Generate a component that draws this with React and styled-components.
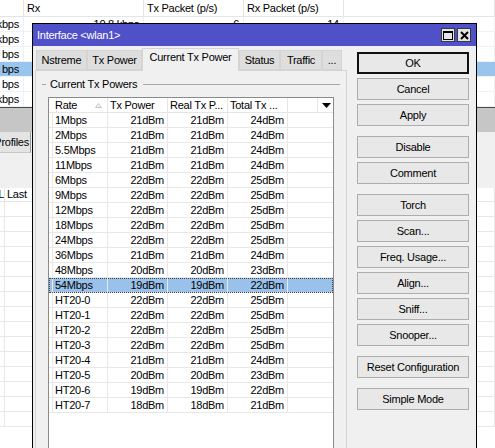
import React from 'react';
import styled, { createGlobalStyle } from 'styled-components';

const GlobalStyle = createGlobalStyle`
  html, body {
    margin: 0;
    padding: 0;
  }
  body {
    font-family: "Liberation Sans", Arial, sans-serif;
    font-size: 11px;
    letter-spacing: -0.25px;
    color: #000;
    background: #fff;
    overflow: hidden;
  }
`;

const Screen = styled.div`
  position: relative;
  width: 495px;
  height: 448px;
  overflow: hidden;
  background: #fff;
`;

// ---- background window (the interface list behind the dialog) ----

const bgCols = '24px 120px 100px 100px 1fr';

const BgHeadRow = styled.div`
  display: grid;
  grid-template-columns: ${bgCols};
  height: 17px;
  box-sizing: border-box;
  border-bottom: 1px solid #e5e5e5;
`;

const BgHeadCell = styled.div`
  border-right: 1px solid #e5e5e5;
  padding-left: 3px;
  line-height: 16px;
  white-space: nowrap;
  overflow: hidden;
`;

const BgRow = styled.div`
  display: grid;
  grid-template-columns: ${bgCols};
  height: 15px;
  box-sizing: border-box;
  border-bottom: 1px solid #f0f0f0;
  background: ${(p) => (p.$selected ? '#99c4ec' : '#fff')};
`;

const BgCell = styled.div`
  display: flex;
  justify-content: flex-end;
  padding-right: 4px;
  line-height: 14px;
  white-space: nowrap;
  overflow: hidden;
  border-right: 1px solid ${(p) => (p.$selected ? 'transparent' : '#f0f0f0')};
`;

const GrayBar = styled.div`
  height: 25px;
  box-sizing: border-box;
  border-top: 1px solid #4a4a4a;
  background: #c6c6c6;
`;

const SubTabStrip = styled.div`
  display: flex;
  height: 21px;
  background: #f0f0f0;
`;

const SubTab = styled.div`
  width: 31px;
  box-sizing: border-box;
  display: flex;
  justify-content: flex-end;
  background: #e4e4e4;
  border-right: 1px solid #9a9a9a;
  border-bottom: 1px solid #c8c8c8;
  line-height: 20px;
  white-space: nowrap;
  overflow: hidden;
  padding-right: 1px;
`;

const FilterArea = styled.div`
  height: 35px;
  background: #f0f0f0;
`;

const SubHead = styled.div`
  display: grid;
  grid-template-columns: 5px 1fr;
  height: 14px;
  box-sizing: border-box;
  border-bottom: 1px solid #e5e5e5;
  background: #fff;
`;

const SubHeadCell = styled.div`
  display: flex;
  justify-content: ${(p) => (p.$end ? 'flex-end' : 'flex-start')};
  border-right: 1px solid #e5e5e5;
  padding-left: 2px;
  line-height: 13px;
  white-space: nowrap;
  overflow: hidden;
`;

const SubRow = styled.div`
  display: grid;
  grid-template-columns: 5px 1fr;
  height: 15px;
  box-sizing: border-box;
  border-bottom: 1px solid #e8e8e8;
`;

const SubCell = styled.div`
  border-right: 1px solid #e8e8e8;
`;

// ---- dialog ----

const Dialog = styled.div`
  position: absolute;
  left: 32px;
  top: 23px;
  width: 445px;
  height: 440px;
  box-sizing: border-box;
  border: 1px solid #000;
  background: #f0f0f0;
  display: flex;
  flex-direction: column;
`;

const TitleBar = styled.div`
  height: 22px;
  flex: none;
  background: #5050c8;
  color: #fff;
  display: flex;
  align-items: center;
  padding: 0 5px 0 4px;
  font-size: 11px;
`;

const TitleText = styled.div`
  flex: 1;
  white-space: nowrap;
`;

const TitleButtons = styled.div`
  display: flex;
  gap: 2px;
`;

const TitleButton = styled.div`
  width: 14px;
  height: 14px;
  box-sizing: border-box;
  border: 1px solid #3a3a3a;
  background: #e4e4e4;
  display: flex;
  align-items: center;
  justify-content: center;
`;

const Body = styled.div`
  flex: 1;
  display: flex;
  gap: 10px;
  padding: 2px 7px 0 2px;
  min-height: 0;
`;

const LeftColumn = styled.div`
  width: 312px;
  display: flex;
  flex-direction: column;
`;

const TabRow = styled.div`
  display: flex;
  align-items: flex-end;
  height: 22px;
  padding-left: 1px;
  position: relative;
  z-index: 1;
`;

const Tab = styled.div`
  width: ${(p) => p.$w}px;
  box-sizing: border-box;
  height: ${(p) => (p.$active ? 23 : 20)}px;
  margin-bottom: ${(p) => (p.$active ? -1 : 0)}px;
  border: 1px solid #d4d4d4;
  border-bottom: ${(p) => (p.$active ? 'none' : '1px solid #d4d4d4')};
  background: ${(p) => (p.$active ? '#f0f0f0' : '#dedede')};
  text-align: center;
  line-height: ${(p) => (p.$active ? 17 : 19)}px;
  white-space: nowrap;
  overflow: hidden;
`;

const Panel = styled.div`
  flex: 1;
  border: 1px solid #d4d4d4;
  background: #f0f0f0;
  padding: 0 12px 0 12px;
`;

const GroupHeader = styled.div`
  display: flex;
  align-items: center;
  height: 14px;
  margin: 6px -6px 0 -6px;
  gap: 4px;
`;

const GroupLine = styled.div`
  width: ${(p) => (p.$w ? `${p.$w}px` : 'auto')};
  flex: ${(p) => (p.$w ? 'none' : 1)};
  margin-left: ${(p) => (p.$w ? 0 : 2)}px;
  border-top: 1px solid #a8a8a8;
`;

const GroupLabel = styled.span`
  white-space: nowrap;
`;

const Table = styled.div`
  margin-top: 6px;
  width: 286px;
  height: 400px;
  box-sizing: border-box;
  border: 1px solid #8a8a8a;
  background: #fff;
`;

const tableCols = '4px 55px 60px 60px 60px 30px 1fr';

const HeadRow = styled.div`
  display: grid;
  grid-template-columns: ${tableCols};
  height: 15px;
  box-sizing: border-box;
  border-bottom: 1px solid #e5e5e5;
`;

const HeadCell = styled.div`
  box-sizing: border-box;
  border-right: ${(p) => (p.$last ? 'none' : '1px solid #e5e5e5')};
  padding-left: 2px;
  line-height: 14px;
  white-space: nowrap;
  overflow: hidden;
  display: flex;
  align-items: center;
  justify-content: ${(p) => (p.$center ? 'center' : 'space-between')};
  padding-right: ${(p) => (p.$center ? 0 : 5)}px;
`;

const Row = styled.div`
  display: grid;
  grid-template-columns: ${tableCols};
  height: 15px;
  box-sizing: border-box;
  border-bottom: 1px solid #e8e8e8;
  background: ${(p) => (p.$selected ? '#99c1e9' : '#fff')};
  outline: ${(p) => (p.$selected ? '1px dotted #444' : 'none')};
  outline-offset: -1px;
`;

const Cell = styled.div`
  box-sizing: border-box;
  border-right: ${(p) => (p.$noLine ? 'none' : '1px solid #e8e8e8')};
  text-align: ${(p) => (p.$right ? 'right' : 'left')};
  padding: ${(p) => (p.$right ? '0 3px 0 0' : '0 0 0 2px')};
  line-height: 14px;
  white-space: nowrap;
  overflow: hidden;
`;

const ButtonColumn = styled.div`
  width: 112px;
  margin-top: 4px;
  display: flex;
  flex-direction: column;
  gap: 10px;
`;

const ButtonGroup = styled.div`
  display: flex;
  flex-direction: column;
  gap: 4px;
`;

const Button = styled.div`
  height: 22px;
  box-sizing: border-box;
  border: ${(p) => (p.$default ? '2px solid #111' : '1px solid #adadad')};
  background: #e8e8e8;
  display: flex;
  align-items: center;
  justify-content: center;
  white-space: nowrap;
`;

// only the parts of the list that peek out around the dialog carry text
const bgRows = [
  ['7.5 kbps', '10.8 kbps', '6', '14'],
  ['23.1 kbps', '', '', ''],
  ['0 bps', '', '', ''],
  ['0 bps', '', '', ''],
  ['0 bps', '', '', ''],
  ['1.2 kbps', '', '', ''],
];

const powers = [
  ['1Mbps', 21, 21, 24],
  ['2Mbps', 21, 21, 24],
  ['5.5Mbps', 21, 21, 24],
  ['11Mbps', 21, 21, 24],
  ['6Mbps', 22, 22, 25],
  ['9Mbps', 22, 22, 25],
  ['12Mbps', 22, 22, 25],
  ['18Mbps', 22, 22, 25],
  ['24Mbps', 22, 22, 25],
  ['36Mbps', 21, 21, 24],
  ['48Mbps', 20, 20, 23],
  ['54Mbps', 19, 19, 22],
  ['HT20-0', 22, 22, 25],
  ['HT20-1', 22, 22, 25],
  ['HT20-2', 22, 22, 25],
  ['HT20-3', 22, 22, 25],
  ['HT20-4', 21, 21, 24],
  ['HT20-5', 20, 20, 23],
  ['HT20-6', 19, 19, 22],
  ['HT20-7', 18, 18, 21],
];

const tabs = [
  ['Nstreme', 51],
  ['Tx Power', 55],
  ['Current Tx Power', 97],
  ['Status', 41],
  ['Traffic', 42],
  ['...', 20],
];

const buttonGroups = [
  ['OK', 'Cancel', 'Apply'],
  ['Disable', 'Comment'],
  ['Torch', 'Scan...', 'Freq. Usage...', 'Align...', 'Sniff...', 'Snooper...'],
  ['Reset Configuration'],
  ['Simple Mode'],
];

const MaxIcon = () => (
  <svg width="10" height="9" viewBox="0 0 10 9">
    <rect x="0.5" y="0.5" width="9" height="8" fill="none" stroke="#000" />
    <line x1="0" y1="1.5" x2="10" y2="1.5" stroke="#000" />
  </svg>
);

const CloseIcon = () => (
  <svg width="9" height="9" viewBox="0 0 9 9">
    <path d="M1 1 L8 8 M8 1 L1 8" stroke="#000" strokeWidth="2" />
  </svg>
);

const SortUp = () => (
  <svg width="7" height="5" viewBox="0 0 7 5">
    <path d="M0.5 4.5 L3.5 0.5 L6.5 4.5 Z" fill="#f4f4f4" stroke="#c4c4c4" />
  </svg>
);

const DropDown = () => (
  <svg width="9" height="5" viewBox="0 0 9 5">
    <path d="M0 0 L9 0 L4.5 5 Z" fill="#000" />
  </svg>
);

export default function App() {
  return (
    <Screen>
      <GlobalStyle />

      <BgHeadRow>
        <BgHeadCell />
        <BgHeadCell>Rx</BgHeadCell>
        <BgHeadCell>Tx Packet (p/s)</BgHeadCell>
        <BgHeadCell>Rx Packet (p/s)</BgHeadCell>
        <BgHeadCell />
      </BgHeadRow>
      {bgRows.map((r, i) => (
        <BgRow key={i} $selected={i === 3}>
          {r.map((v, j) => (
            <BgCell key={j} $selected={i === 3}>{v}</BgCell>
          ))}
          <BgCell $selected={i === 3} />
        </BgRow>
      ))}
      <GrayBar />
      <SubTabStrip>
        <SubTab>Profiles</SubTab>
      </SubTabStrip>
      <FilterArea />
      <SubHead>
        <SubHeadCell $end>L</SubHeadCell>
        <SubHeadCell>Last</SubHeadCell>
      </SubHead>
      {[0, 1, 2, 3, 4, 5, 6, 7, 8, 9, 10, 11, 12, 13, 14].map((i) => (
        <SubRow key={i}>
          <SubCell />
          <SubCell />
        </SubRow>
      ))}

      <Dialog>
        <TitleBar>
          <TitleText>Interface &lt;wlan1&gt;</TitleText>
          <TitleButtons>
            <TitleButton><MaxIcon /></TitleButton>
            <TitleButton><CloseIcon /></TitleButton>
          </TitleButtons>
        </TitleBar>
        <Body>
          <LeftColumn>
            <TabRow>
              {tabs.map(([t, w]) => (
                <Tab key={t} $w={w} $active={t === 'Current Tx Power'}>{t}</Tab>
              ))}
            </TabRow>
            <Panel>
              <GroupHeader>
                <GroupLine $w={4} />
                <GroupLabel>Current Tx Powers</GroupLabel>
                <GroupLine />
              </GroupHeader>
              <Table>
                <HeadRow>
                  <HeadCell />
                  <HeadCell>Rate<SortUp /></HeadCell>
                  <HeadCell>Tx Power</HeadCell>
                  <HeadCell>Real Tx P...</HeadCell>
                  <HeadCell>Total Tx ...</HeadCell>
                  <HeadCell />
                  <HeadCell $last $center><DropDown /></HeadCell>
                </HeadRow>
                {powers.map(([rate, tx, real, total]) => (
                  <Row key={rate} $selected={rate === '54Mbps'}>
                    <Cell />
                    <Cell>{rate}</Cell>
                    <Cell $right>{tx}dBm</Cell>
                    <Cell $right>{real}dBm</Cell>
                    <Cell $right>{total}dBm</Cell>
                    <Cell $noLine />
                    <Cell $noLine />
                  </Row>
                ))}
              </Table>
            </Panel>
          </LeftColumn>
          <ButtonColumn>
            {buttonGroups.map((g, i) => (
              <ButtonGroup key={i}>
                {g.map((b) => (
                  <Button key={b} $default={b === 'OK'}>{b}</Button>
                ))}
              </ButtonGroup>
            ))}
          </ButtonColumn>
        </Body>
      </Dialog>
    </Screen>
  );
}
